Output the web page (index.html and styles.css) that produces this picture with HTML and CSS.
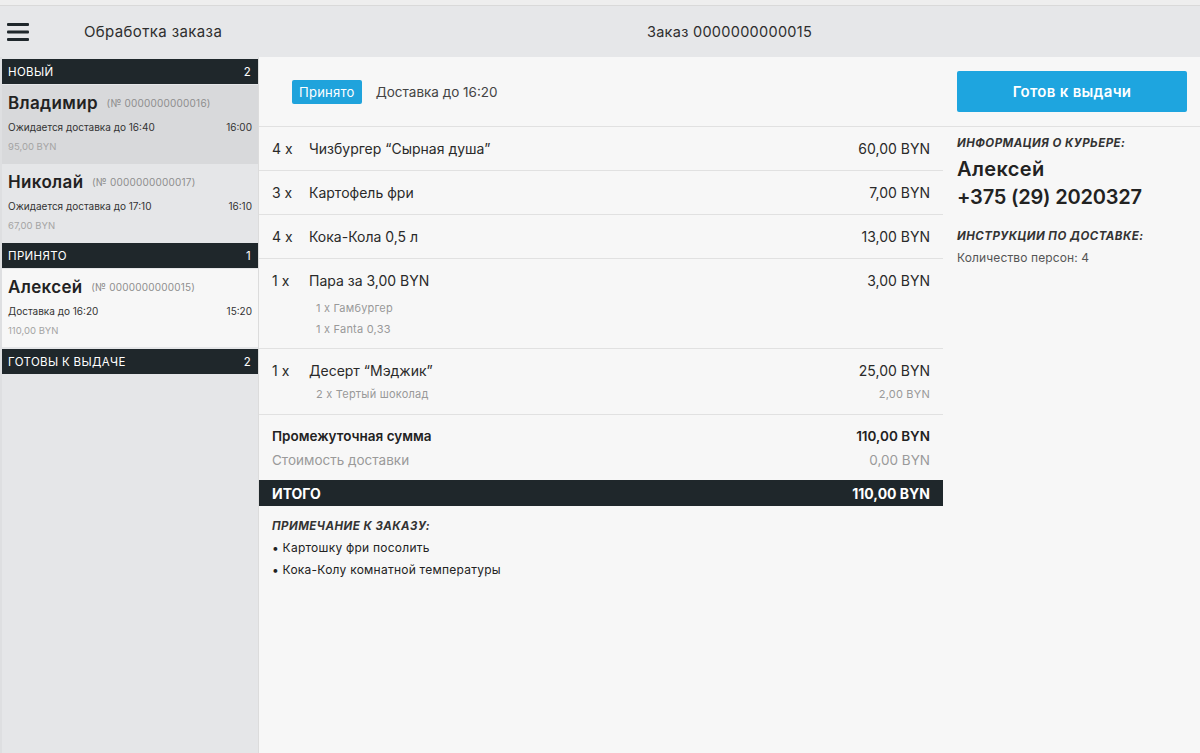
FILE: index.html
```html
<!DOCTYPE html>
<html lang="ru">
<head>
<meta charset="utf-8">
<title>Обработка заказа</title>
<link rel="stylesheet" href="styles.css">
</head>
<body>
<div class="top-strip"></div>
<header class="header">
  <div class="header-left">
    <button class="menu-btn" aria-label="Меню">
      <svg width="22" height="20" viewBox="0 0 22 20"><rect x="0" y="1" width="22" height="3" rx="1" fill="#1f272b"/><rect x="0" y="8.5" width="22" height="3" rx="1" fill="#1f272b"/><rect x="0" y="16" width="22" height="3" rx="1" fill="#1f272b"/></svg>
    </button>
    <span class="header-title">Обработка заказа</span>
  </div>
  <div class="header-order">Заказ 0000000000015</div>
</header>
<div class="layout">
  <aside class="sidebar">
    <div class="group-head"><span>Новый</span><span>2</span></div>
    <div class="order-item selected">
      <div class="oi-name">Владимир <span class="oi-num">(№ 0000000000016)</span></div>
      <div class="oi-sub"><span>Ожидается доставка до 16:40</span><span>16:00</span></div>
      <div class="oi-price">95,00 BYN</div>
    </div>
    <div class="order-item">
      <div class="oi-name">Николай <span class="oi-num">(№ 0000000000017)</span></div>
      <div class="oi-sub"><span>Ожидается доставка до 17:10</span><span>16:10</span></div>
      <div class="oi-price">67,00 BYN</div>
    </div>
    <div class="group-head"><span>Принято</span><span>1</span></div>
    <div class="order-item active">
      <div class="oi-name">Алексей <span class="oi-num">(№ 0000000000015)</span></div>
      <div class="oi-sub"><span>Доставка до 16:20</span><span>15:20</span></div>
      <div class="oi-price">110,00 BYN</div>
    </div>
    <div class="group-head"><span>Готовы к выдаче</span><span>2</span></div>
  </aside>
  <main class="main">
    <div class="status-bar">
      <span class="badge">Принято</span>
      <span class="status-text">Доставка до 16:20</span>
    </div>
    <div class="action-bar">
      <button class="ready-btn">Готов к выдачи</button>
    </div>
    <section class="order">
      <div class="row">
        <div class="row-main"><span class="qty">4 x</span><span class="name">Чизбургер “Сырная душа”</span><span class="price">60,00 BYN</span></div>
      </div>
      <div class="row">
        <div class="row-main"><span class="qty">3 x</span><span class="name">Картофель фри</span><span class="price">7,00 BYN</span></div>
      </div>
      <div class="row">
        <div class="row-main"><span class="qty">4 x</span><span class="name">Кока-Кола 0,5 л</span><span class="price">13,00 BYN</span></div>
      </div>
      <div class="row combo">
        <div class="row-main"><span class="qty">1 x</span><span class="name">Пара за 3,00 BYN</span><span class="price">3,00 BYN</span></div>
        <div class="row-sub"><span class="sub-name">1 x Гамбургер</span></div>
        <div class="row-sub"><span class="sub-name">1 x Fanta 0,33</span></div>
      </div>
      <div class="row extra">
        <div class="row-main"><span class="qty">1 x</span><span class="name">Десерт “Мэджик”</span><span class="price">25,00 BYN</span></div>
        <div class="row-sub"><span class="sub-name">2 x Тертый шоколад</span><span class="sub-price">2,00 BYN</span></div>
      </div>
      <div class="totals">
        <div class="total-line strong"><span>Промежуточная сумма</span><span>110,00 BYN</span></div>
        <div class="total-line muted"><span>Стоимость доставки</span><span>0,00 BYN</span></div>
      </div>
      <div class="grand"><span>ИТОГО</span><span>110,00 BYN</span></div>
      <div class="note">
        <div class="caption">Примечание к заказу:</div>
        <div class="note-line">• Картошку фри посолить</div>
        <div class="note-line">• Кока-Колу комнатной температуры</div>
      </div>
    </section>
    <section class="courier">
      <div class="caption">Информация о курьере:</div>
      <div class="courier-big first">Алексей</div>
      <div class="courier-big phone">+375 (29) 2020327</div>
      <div class="caption gap">Инструкции по доставке:</div>
      <div class="courier-small">Количество персон: 4</div>
    </section>
  </main>
</div>
</body>
</html>
```
FILE: styles.css
```css
* { box-sizing: border-box; }
html, body { margin: 0; padding: 0; height: 100%; }
body {
  font-family: Inter, "Open Sans", sans-serif;
  color: #2a2a2a;
  background: #f7f7f7;
  height: 753px;
  overflow: hidden;
  display: flex;
  flex-direction: column;
}
.top-strip {
  height: 6px;
  background: #eeeeee;
  border-bottom: 1px solid #d9d9d9;
  flex: none;
}
.header {
  flex: none;
  height: 51px;
  background: #e6e7e9;
  display: grid;
  grid-template-columns: 259px 1fr;
  align-items: center;
}
.header-left { display: flex; align-items: center; }
.menu-btn {
  border: 0;
  background: none;
  padding: 0;
  margin-left: 7px;
  width: 22px;
  height: 20px;
  display: flex;
}
.header-title {
  margin-left: 55px;
  font-size: 15px;
  letter-spacing: 0.025em;
  color: #2e2e2e;
}
.header-order {
  text-align: center;
  font-size: 14.5px;
  letter-spacing: 0.02em;
  color: #2e2e2e;
}
.layout {
  flex: 1;
  display: flex;
  min-height: 0;
}
.sidebar {
  width: 259px;
  flex: none;
  background: #e5e6e8;
  border-left: 2px solid #dedfe1;
  border-right: 1px solid #dcdcdc;
  padding-top: 2px;
}
.group-head {
  height: 25px;
  background: #1f272b;
  color: #fff;
  font-size: 11.5px;
  letter-spacing: 0.03em;
  text-transform: uppercase;
  display: flex;
  justify-content: space-between;
  align-items: center;
  padding: 0 7px 0 6px;
  margin-bottom: 1px;
}
.order-item {
  padding: 6px 6px 9px 6px;
  margin-bottom: 1px;
}
.order-item.selected { background: #d8d9db; padding-top: 7px; padding-bottom: 10px; }
.order-item.active { background: #f7f7f7; padding-top: 7px; margin-bottom: 2px; }
.oi-name {
  font-size: 17px;
  font-weight: 600;
  line-height: 22px;
  letter-spacing: 0.02em;
  color: #222;
}
.oi-num { font-size: 10px; font-weight: 400; letter-spacing: 0.02em; color: #8e8e8e; margin-left: 4px; vertical-align: 2px; }
.oi-sub {
  margin-top: 6px;
  font-size: 10px;
  line-height: 14px;
  display: flex;
  justify-content: space-between;
  color: #333;
}
.oi-price {
  margin-top: 6px;
  font-size: 9.5px;
  line-height: 14px;
  color: #a4a4a4;
}
.main {
  flex: 1;
  display: grid;
  grid-template-columns: 684px 1fr;
  grid-template-rows: 70px 1fr;
  background: #f7f7f7;
}
.status-bar {
  display: flex;
  align-items: center;
  padding-left: 33px;
  border-bottom: 1px solid #e1e1e1;
}
.badge {
  background: #1fa3dc;
  color: #fff;
  font-size: 13px;
  height: 24px;
  line-height: 24px;
  padding: 0 7px;
  border-radius: 2px;
  letter-spacing: 0.02em;
}
.status-text { margin-left: 14px; font-size: 13.5px; color: #444; }
.action-bar {
  border-bottom: 1px solid #e1e1e1;
  padding: 14px 13px 0 14px;
}
.ready-btn {
  width: 100%;
  height: 41px;
  border: 0;
  border-radius: 2px;
  background: #1ea5df;
  color: #fff;
  font-family: inherit;
  font-size: 15px;
  font-weight: 600;
  letter-spacing: 0.02em;
}
.order { display: flex; flex-direction: column; }
.row {
  border-bottom: 1px solid #e1e1e1;
  padding: 12px 13px 11px 13px;
}
.row.combo { padding-bottom: 8px; }
.row.extra { padding-bottom: 9px; }
.row-main {
  display: flex;
  align-items: center;
  font-size: 14px;
  line-height: 20px;
  color: #2a2a2a;
}
.qty { width: 37px; flex: none; }
.name { flex: 1; }
.price { text-align: right; }
.row-sub {
  display: flex;
  justify-content: space-between;
  font-size: 11px;
  line-height: 21px;
  letter-spacing: 0.02em;
  color: #999;
  padding-left: 44px;
}
.combo .row-sub:nth-child(2) { margin-top: 7px; }
.extra .row-sub:nth-child(2) { margin-top: 3px; }
.totals { padding: 11px 13px 10px 13px; }
.total-line {
  display: flex;
  justify-content: space-between;
  font-size: 13.5px;
  line-height: 20px;
}
.total-line + .total-line { margin-top: 4px; }
.total-line.strong { font-weight: 600; color: #222; }
.total-line.muted { color: #9a9a9a; }
.grand {
  height: 26px;
  background: #1f272b;
  color: #fff;
  font-size: 14px;
  font-weight: 700;
  display: flex;
  justify-content: space-between;
  align-items: center;
  padding: 0 13px;
}
.note { padding: 12px 13px; }
.caption {
  font-size: 11.5px;
  font-style: italic;
  font-weight: 700;
  text-transform: uppercase;
  letter-spacing: 0.04em;
  line-height: 16px;
  color: #333;
}
.note-line { font-size: 12px; line-height: 22px; letter-spacing: 0.02em; color: #222; }
.note .caption { margin-bottom: 3px; }
.courier { padding: 8px 14px; }
.courier-big { font-size: 20px; font-weight: 600; line-height: 28px; color: #222; letter-spacing: 0.02em; }
.courier-big.phone { letter-spacing: -0.01em; }
.courier-big.first { margin-top: 4px; }
.caption.gap { margin-top: 17px; }
.courier-small { margin-top: 5px; font-size: 12px; line-height: 18px; letter-spacing: 0.01em; color: #555; }
```
